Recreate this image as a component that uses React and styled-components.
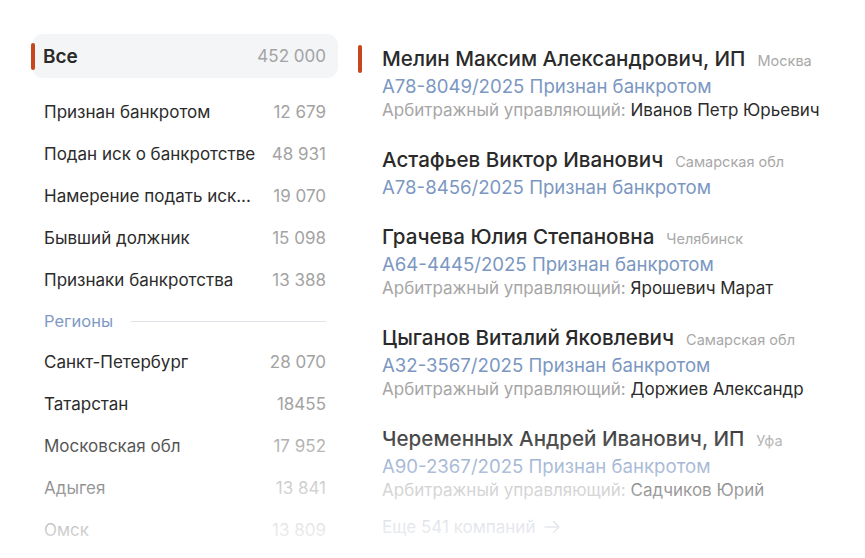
import React from "react";
import styled, { createGlobalStyle } from "styled-components";

const GlobalStyle = createGlobalStyle`
  html, body {
    margin: 0;
    padding: 0;
    background: #ffffff;
  }
  body {
    font-family: Inter, "Noto Sans", "Liberation Sans", sans-serif;
    color: #2b2b2b;
    -webkit-font-smoothing: antialiased;
  }
`;

const Page = styled.div`
  position: relative;
  height: 558px;
  overflow: hidden;
  display: flex;
  gap: 20px;
  padding: 34px 0 0 32px;
  box-sizing: border-box;
`;

const Fade = styled.div`
  position: absolute;
  left: 0;
  right: 0;
  bottom: 0;
  height: 140px;
  pointer-events: none;
  background: linear-gradient(
    180deg,
    rgba(255, 255, 255, 0) 0%,
    rgba(255, 255, 255, 0.5) 50%,
    rgba(255, 255, 255, 0.92) 100%
  );
`;

/* ---------- left filter list ---------- */

const Sidebar = styled.nav`
  width: 306px;
  flex-shrink: 0;
  display: flex;
  flex-direction: column;
`;

const TotalRow = styled.div`
  position: relative;
  display: flex;
  align-items: center;
  justify-content: space-between;
  height: 44px;
  padding: 0 12px 0 11px;
  margin-bottom: 13px;
  border-radius: 11px;
  background: #f3f5f7;

  &::before {
    content: "";
    position: absolute;
    left: -1px;
    top: 9px;
    width: 4px;
    height: 27px;
    border-radius: 2px;
    background: #c8461b;
  }
`;

const TotalLabel = styled.span`
  font-size: 19px;
  font-weight: 600;
  color: #2a2a2a;
`;

const Row = styled.div`
  display: flex;
  align-items: center;
  justify-content: space-between;
  height: 42px;
  padding: 0 12px;
  font-size: 17px;
`;

const RowLabel = styled.span`
  color: #2b2b2b;
  white-space: nowrap;
  margin-right: 14px;
`;

const Count = styled.span`
  color: #a3a3a3;
  font-size: 17px;
  white-space: nowrap;
`;

const SectionHead = styled.div`
  display: flex;
  align-items: center;
  gap: 18px;
  height: 40px;
  padding: 0 12px;
  font-size: 16.5px;
  color: #7f9bc4;

  &::after {
    content: "";
    flex: 1;
    height: 1px;
    background: #dfe3e8;
  }
`;

/* ---------- right company list ---------- */

const Results = styled.section`
  display: flex;
  flex-direction: column;
  gap: 25px;
  padding-top: 12px;
`;

const Company = styled.article`
  position: relative;
  padding-left: 24px;

  &::before {
    content: "";
    display: ${(p) => (p.$active ? "block" : "none")};
    position: absolute;
    left: 0;
    top: -1px;
    width: 4px;
    height: 28px;
    border-radius: 2px;
    background: #c8461b;
  }
`;

const NameLine = styled.div`
  display: flex;
  align-items: baseline;
  gap: 12px;
  line-height: 26px;
  white-space: nowrap;
`;

const Name = styled.span`
  font-size: 20.6px;
  font-weight: 500;
  color: #2a2a2a;
`;

const City = styled.span`
  font-size: 14.5px;
  color: #a8a8a8;
`;

const CaseLine = styled.div`
  font-size: 18.6px;
  line-height: 24px;
  color: #7b97c2;
  white-space: nowrap;
`;

const ManagerLine = styled.div`
  font-size: 17px;
  line-height: 24px;
  color: #a6a6a6;
  white-space: nowrap;

  b {
    font-weight: 400;
    color: #2b2b2b;
  }
`;

const MoreLink = styled.div`
  display: flex;
  align-items: center;
  gap: 9px;
  padding-left: 24px;
  margin-top: -10px;
  font-size: 17px;
  color: #9aa6b8;
`;

const filters = [
  ["Признан банкротом", "12 679"],
  ["Подан иск о банкротстве", "48 931"],
  ["Намерение подать иск...", "19 070"],
  ["Бывший должник", "15 098"],
  ["Признаки банкротства", "13 388"],
];

const regions = [
  ["Санкт-Петербург", "28 070"],
  ["Татарстан", "18455"],
  ["Московская обл", "17 952"],
  ["Адыгея", "13 841"],
  ["Омск", "13 809"],
];

const companies = [
  {
    name: "Мелин Максим Александрович, ИП",
    city: "Москва",
    num: "А78-8049/2025",
    manager: "Иванов Петр Юрьевич",
    active: true,
  },
  { name: "Астафьев Виктор Иванович", city: "Самарская обл", num: "А78-8456/2025" },
  {
    name: "Грачева Юлия Степановна",
    city: "Челябинск",
    num: "А64-4445/2025",
    manager: "Ярошевич Марат",
  },
  {
    name: "Цыганов Виталий Яковлевич",
    city: "Самарская обл",
    num: "А32-3567/2025",
    manager: "Доржиев Александр",
  },
  {
    name: "Черемённых Андрей Иванович, ИП",
    city: "Уфа",
    num: "А90-2367/2025",
    manager: "Садчиков Юрий",
  },
];

const Arrow = () => (
  <svg width="17" height="14" viewBox="0 0 17 14" fill="none">
    <path
      d="M1 7h14M9.5 1.5 15 7l-5.5 5.5"
      stroke="currentColor"
      strokeWidth="1.5"
      strokeLinecap="round"
      strokeLinejoin="round"
    />
  </svg>
);

export default function App() {
  return (
    <>
      <GlobalStyle />
      <Page>
        <Sidebar>
          <TotalRow>
            <TotalLabel>Все</TotalLabel>
            <Count>452 000</Count>
          </TotalRow>
          {filters.map(([label, n]) => (
            <Row key={label}>
              <RowLabel>{label}</RowLabel>
              <Count>{n}</Count>
            </Row>
          ))}
          <SectionHead>Регионы</SectionHead>
          {regions.map(([label, n]) => (
            <Row key={label}>
              <RowLabel>{label}</RowLabel>
              <Count>{n}</Count>
            </Row>
          ))}
        </Sidebar>

        <Results>
          {companies.map((c) => (
            <Company key={c.num} $active={c.active}>
              <NameLine>
                <Name>{c.name.replace("ё", "е")}</Name>
                <City>{c.city}</City>
              </NameLine>
              <CaseLine>{c.num} Признан банкротом</CaseLine>
              {c.manager && (
                <ManagerLine>
                  Арбитражный управляющий: <b>{c.manager}</b>
                </ManagerLine>
              )}
            </Company>
          ))}
          <MoreLink>
            Еще 541 компаний <Arrow />
          </MoreLink>
        </Results>
        <Fade />
      </Page>
    </>
  );
}
